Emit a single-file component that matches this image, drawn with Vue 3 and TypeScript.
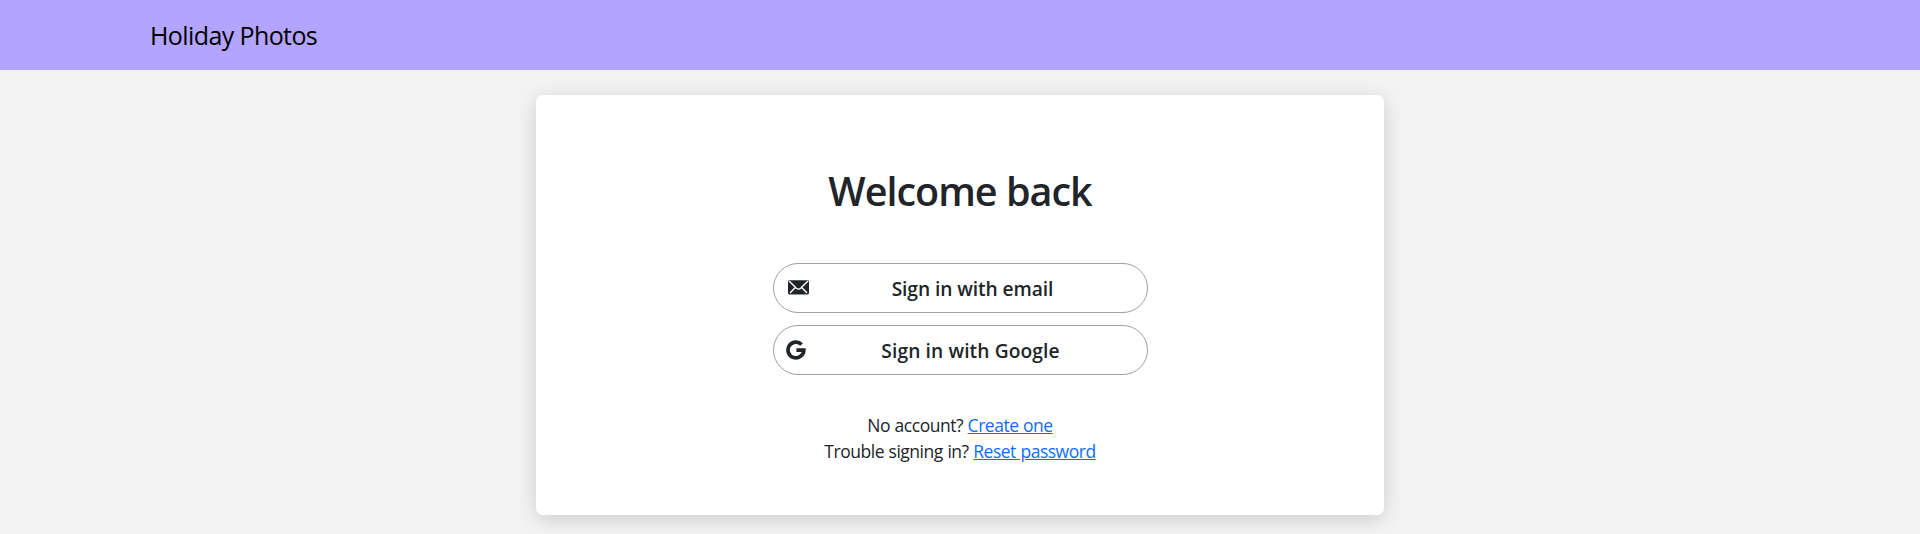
<script setup lang="ts">
interface Provider {
  id: 'email' | 'google'
  label: string
}

interface HelpLine {
  id: string
  question: string
  action: string
}

const providers: Provider[] = [
  { id: 'email', label: 'Sign in with email' },
  { id: 'google', label: 'Sign in with Google' },
]

const helpLines: HelpLine[] = [
  { id: 'create', question: 'No account?', action: 'Create one' },
  { id: 'reset', question: 'Trouble signing in?', action: 'Reset password' },
]
</script>

<template>
  <div class="page">
    <header class="navbar">
      <a class="brand">Holiday Photos</a>
    </header>
    <main class="card">
      <h1 class="title">Welcome back</h1>
      <div class="providers">
        <button v-for="p in providers" :key="p.id" type="button" class="provider" :class="p.id">
          <svg v-if="p.id === 'email'" class="icon" viewBox="0 0 21 15" aria-hidden="true">
            <rect y="0.3" width="21" height="14.2" rx="1.4" fill="#212529" />
            <path d="M1 1 L8.4 8.3 Q10.5 10 12.6 8.3 L20 1 M2 13 L7 7.8 M19 13 L14 7.8" fill="none" stroke="#fff" stroke-width="1.4" />
          </svg>
          <svg v-else class="icon" viewBox="0 0 20 20" aria-hidden="true">
            <path d="M15.6 4.5 A7.9 7.9 0 1 0 17.8 10.2 L10.4 10.2" fill="none" stroke="#212529" stroke-width="3.7" />
          </svg>
          <span class="label">{{ p.label }}</span>
        </button>
      </div>
      <div class="help">
        <p v-for="line in helpLines" :key="line.id" class="help-line" :class="line.id">
          {{ line.question }} <a class="link">{{ line.action }}</a>
        </p>
      </div>
    </main>
  </div>
</template>

<style>
body {
  margin: 0;
  background: #f3f3f3;
}
</style>

<style scoped>
.page {
  height: 534px;
  overflow: hidden;
  background: #f3f3f3;
  color: #212529;
  font-family: 'Open Sans', 'Noto Sans', sans-serif;
}
.navbar {
  display: flex;
  align-items: center;
  box-sizing: border-box;
  height: 70px;
  padding: 0 150px;
  background: #b2a4ff;
}
.brand {
  color: #000;
  font-size: 25px;
  font-weight: 400;
  letter-spacing: -0.6px;
  line-height: 36px;
  white-space: nowrap;
}
.card {
  display: flex;
  flex-direction: column;
  align-items: center;
  box-sizing: border-box;
  width: 848px;
  height: 420px;
  margin: 25px auto 0;
  padding-top: 72px;
  border-radius: 7px;
  background: #fff;
  box-shadow: 0 4px 20px rgba(0, 0, 0, 0.16);
}
.title {
  margin: 0;
  font-size: 39.5px;
  font-weight: 600;
  letter-spacing: -1px;
  line-height: 48px;
  white-space: nowrap;
}
.providers {
  display: flex;
  flex-direction: column;
  gap: 12px;
  margin-top: 48px;
}
.provider {
  display: flex;
  align-items: center;
  box-sizing: border-box;
  width: 375px;
  height: 50px;
  margin: 0;
  padding: 0 0 0 12px;
  border: 1px solid #a0a0a0;
  border-radius: 25px;
  background: #fff;
  color: #212529;
  font: 600 19.2px/28px 'Open Sans', 'Noto Sans', sans-serif;
}
.icon {
  flex: none;
  width: 20px;
  height: 20px;
}
.email .icon {
  width: 21px;
  height: 15px;
  margin: -1px 0 0 2px;
}
.label {
  flex: 1;
  padding: 1px 10px 0 0;
  text-align: center;
  white-space: nowrap;
}
.email .label {
  letter-spacing: -0.08px;
}
.google .label {
  padding-right: 11px;
  letter-spacing: 0.1px;
}
.help {
  margin-top: 37px;
  font-size: 17.5px;
  font-weight: 400;
  letter-spacing: -0.48px;
  word-spacing: 0.5px;
  line-height: 26px;
  text-align: center;
}
.help-line {
  margin: 0;
  white-space: nowrap;
}
.link {
  color: #0d6efd;
  text-decoration: underline;
}
</style>
